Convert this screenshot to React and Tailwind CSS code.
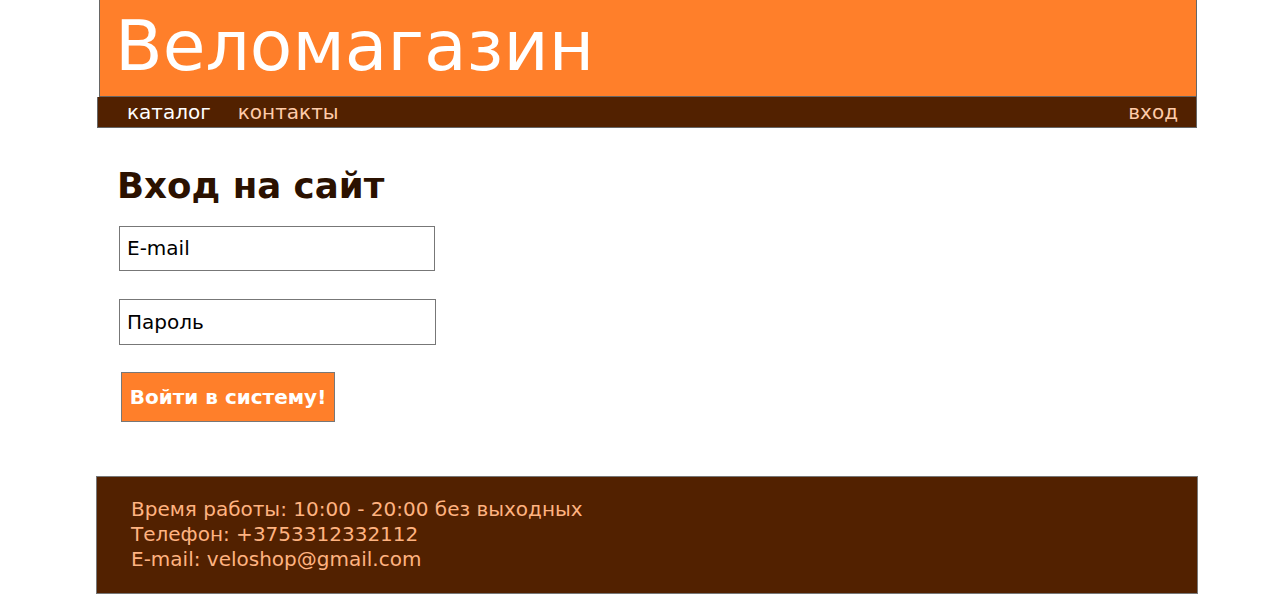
import React from 'react';

export default function App() {
  return (
    <div className="min-h-[595px] bg-white font-['DejaVu_Sans',sans-serif]">
      <div className="w-[1102px] ml-[96px]">
        <header className="ml-[3px] w-[1098px] h-[97px] bg-[#ff7f2a] border-x border-b border-[#666] pl-[15px]">
          <h1 className="text-[69.5px] leading-none text-white pt-[11px]">Веломагазин</h1>
        </header>
        <nav className="ml-[1px] w-[1100px] h-[31px] bg-[#522100] border border-t-0 border-[#666] flex items-center justify-between px-[29px] text-[20px] leading-none">
          <div className="flex gap-[27px]">
            <a className="text-white">каталог</a>
            <a className="text-[#ffccaa]">контакты</a>
          </div>
          <a className="text-[#ffccaa] mr-[-11px]">вход</a>
        </nav>

        <main className="pl-[23px] pt-[40px] pb-[54px]">
          <h2 className="ml-[-2px] text-[35.6px] font-bold text-[#2b1100] leading-none">Вход на сайт</h2>
          <form className="mt-[22px] flex flex-col items-start" onSubmit={e => e.preventDefault()}>
            <input
              placeholder="E-mail"
              className="w-[316px] h-[45px] border border-[#777] px-[7px] text-[20px] placeholder:text-black outline-none"
            />
            <input
              type="password"
              placeholder="Пароль"
              className="mt-[28px] w-[317px] h-[46px] border border-[#777] px-[7px] text-[20px] placeholder:text-black outline-none"
            />
            <button
              type="submit"
              className="mt-[27px] ml-[2px] w-[214px] h-[50px] bg-[#ff7f2a] border border-[#777] text-white font-bold text-[20px]"
            >
              Войти в систему!
            </button>
          </form>
        </main>

        <footer className="w-[1102px] h-[118px] bg-[#522100] border border-[#777] pl-[34px] pt-[20px] text-[20px] leading-[25px] text-[#ffb380]">
          <p>Время работы: 10:00 - 20:00 без выходных</p>
          <p>Телефон: +3753312332112</p>
          <p>E-mail: veloshop@gmail.com</p>
        </footer>
      </div>
    </div>
  );
}
